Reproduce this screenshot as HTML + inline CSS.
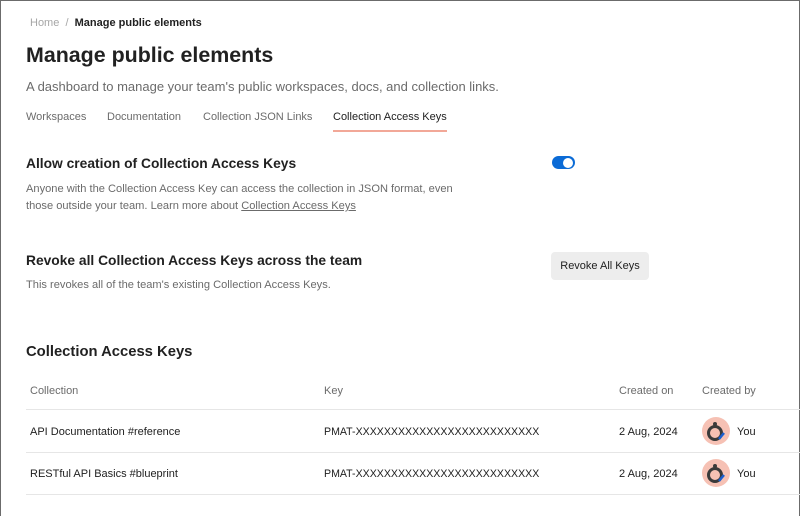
<!DOCTYPE html>
<html><head><style>
body{margin:0;width:800px;height:517px;overflow:hidden;background:#fff;font-family:"Liberation Sans",sans-serif;color:#212121}
.frame{position:absolute;left:0;top:0;width:798px;height:515px;border:1px solid #6b6b6b;border-bottom:none}
.a{position:absolute;white-space:nowrap}
.line{position:absolute;left:26px;right:0;height:1px;background:#e6e6e6}
</style></head><body>
<div class="frame"></div>
<div class="a" style="left:30px;top:17px;font-size:11px;color:#a6a6a6">Home &nbsp;/ &nbsp;<span style="color:#212121;font-weight:bold">Manage public elements</span></div>
<div class="a" style="left:26px;top:43px;font-size:21.4px;font-weight:bold;color:#212121">Manage public elements</div>
<div class="a" style="left:26px;top:79px;font-size:13px;color:#6b6b6b">A dashboard to manage your team's public workspaces, docs, and collection links.</div>
<div class="a" style="left:26px;top:111px;font-size:11px;color:#6b6b6b">Workspaces</div>
<div class="a" style="left:107px;top:111px;font-size:11px;color:#6b6b6b">Documentation</div>
<div class="a" style="left:203px;top:111px;font-size:11px;color:#6b6b6b">Collection JSON Links</div>
<div class="a" style="left:333px;top:111px;font-size:11px;color:#212121">Collection Access Keys</div>
<div class="a" style="left:333px;top:130px;width:114px;height:2px;background:#f2a898"></div>
<div class="a" style="left:26px;top:156px;font-size:13.8px;font-weight:bold">Allow creation of Collection Access Keys</div>
<div class="a" style="left:26px;top:181px;font-size:11.1px;color:#6b6b6b;line-height:17px">Anyone with the Collection Access Key can access the collection in JSON format, even<br>those outside your team. Learn more about <span style="text-decoration:underline">Collection Access Keys</span></div>
<div class="a" style="left:552px;top:156px;width:23px;height:13px;border-radius:7px;background:#0b6bd6"></div>
<div class="a" style="left:563px;top:157.5px;width:10px;height:10px;border-radius:50%;background:#fff"></div>
<div class="a" style="left:26px;top:253px;font-size:13.8px;font-weight:bold">Revoke all Collection Access Keys across the team</div>
<div class="a" style="left:26px;top:279px;font-size:11.1px;color:#6b6b6b">This revokes all of the team's existing Collection Access Keys.</div>
<div class="a" style="left:551px;top:252px;width:98px;height:28px;border-radius:4px;background:#ededed;font-size:11px;line-height:28px;text-align:center;color:#212121">Revoke All Keys</div>
<div class="a" style="left:26px;top:344px;font-size:14.8px;font-weight:bold">Collection Access Keys</div>
<div class="a" style="left:30px;top:385px;font-size:11px;color:#6b6b6b">Collection</div>
<div class="a" style="left:324px;top:385px;font-size:11px;color:#6b6b6b">Key</div>
<div class="a" style="left:619px;top:385px;font-size:11px;color:#6b6b6b">Created on</div>
<div class="a" style="left:702px;top:385px;font-size:11px;color:#6b6b6b">Created by</div>
<div class="line" style="top:409px"></div>
<div class="line" style="top:452px"></div>
<div class="line" style="top:494px"></div>
<div class="a" style="left:30px;top:426px;font-size:11px">API Documentation #reference</div>
<div class="a" style="left:324px;top:426px;font-size:10.6px">PMAT-XXXXXXXXXXXXXXXXXXXXXXXXXX</div>
<div class="a" style="left:619px;top:426px;font-size:11px">2 Aug, 2024</div>
<div class="a" style="left:737px;top:426px;font-size:11px">You</div>
<div class="a" style="left:30px;top:468px;font-size:11px">RESTful API Basics #blueprint</div>
<div class="a" style="left:324px;top:468px;font-size:10.6px">PMAT-XXXXXXXXXXXXXXXXXXXXXXXXXX</div>
<div class="a" style="left:619px;top:468px;font-size:11px">2 Aug, 2024</div>
<div class="a" style="left:737px;top:468px;font-size:11px">You</div>
<svg class="a" style="left:702px;top:417px" width="28" height="28" viewBox="0 0 28 28"><circle cx="14" cy="14" r="14" fill="#f6c1b4"/><circle cx="13" cy="16" r="6.5" fill="none" stroke="#3a3a3a" stroke-width="3"/><circle cx="13" cy="7" r="2" fill="#3a3a3a"/><path d="M17 22l5-6" stroke="#1a5fd0" stroke-width="2.5"/></svg>
<svg class="a" style="left:702px;top:459px" width="28" height="28" viewBox="0 0 28 28"><circle cx="14" cy="14" r="14" fill="#f6c1b4"/><circle cx="13" cy="16" r="6.5" fill="none" stroke="#3a3a3a" stroke-width="3"/><circle cx="13" cy="7" r="2" fill="#3a3a3a"/><path d="M17 22l5-6" stroke="#1a5fd0" stroke-width="2.5"/></svg>
</body></html>
